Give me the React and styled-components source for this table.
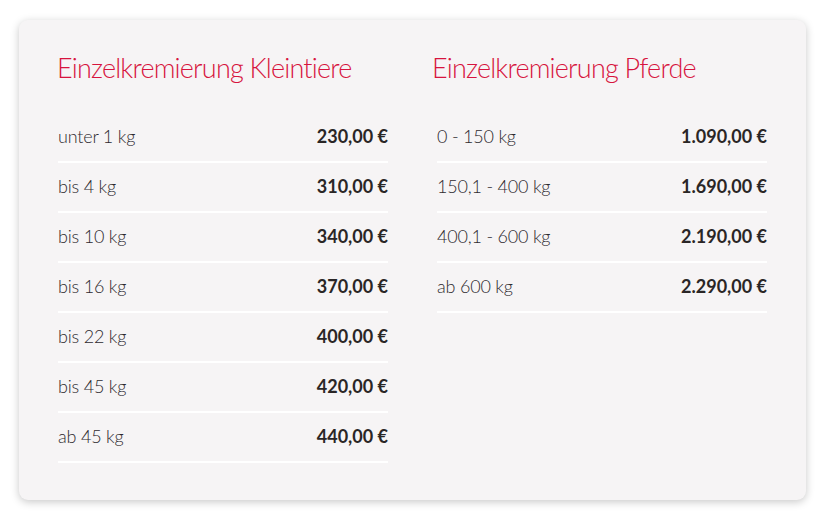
import React from "react";
import styled, { createGlobalStyle } from "styled-components";

const small = [
  ["unter 1 kg", "230,00 €"],
  ["bis 4 kg", "310,00 €"],
  ["bis 10 kg", "340,00 €"],
  ["bis 16 kg", "370,00 €"],
  ["bis 22 kg", "400,00 €"],
  ["bis 45 kg", "420,00 €"],
  ["ab 45 kg", "440,00 €"]
];

const horses = [
  ["0 - 150 kg", "1.090,00 €"],
  ["150,1 - 400 kg", "1.690,00 €"],
  ["400,1 - 600 kg", "2.190,00 €"],
  ["ab 600 kg", "2.290,00 €"]
];

const PriceList = ({ title, rows, shift }) => (
  <Column>
    <Heading $shift={shift}>{title}</Heading>
    <Rows>
      {rows.map(([label, price]) => (
        <Row key={label}>
          <Label>{label}</Label>
          <Price>{price}</Price>
        </Row>
      ))}
    </Rows>
  </Column>
);

const App = () => (
  <>
    <GlobalStyle />
    <Page>
      <Card>
        <PriceList title="Einzelkremierung Kleintiere" rows={small} shift={0} />
        <PriceList title="Einzelkremierung Pferde" rows={horses} shift={-4} />
      </Card>
    </Page>
  </>
);

export default App;

const GlobalStyle = createGlobalStyle`
  body {
    margin: 0;
    background: #ffffff;
    font-family: Lato, "Open Sans", sans-serif;
  }
`;

const Page = styled.div`
  padding: 20px 19px 24px 19px;
`;

const Card = styled.div`
  display: grid;
  grid-template-columns: 330px 330px;
  column-gap: 49px;
  align-items: start;
  height: 480px;
  box-sizing: border-box;
  padding: 0 39px;
  background: #f6f4f5;
  border-radius: 9px;
  box-shadow: 0 2px 8px rgba(0, 0, 0, 0.22);
`;

const Column = styled.div`
  display: flex;
  flex-direction: column;
`;

const Heading = styled.h2`
  margin: 30px 0 27px ${(p) => p.$shift - 1}px;
  line-height: 36px;
  font-family: Lato, sans-serif;
  font-weight: 300;
  font-size: 27px;
  letter-spacing: -0.8px;
  color: #d7143e;
`;

const Rows = styled.div`
  display: flex;
  flex-direction: column;
`;

const Row = styled.div`
  display: flex;
  justify-content: space-between;
  align-items: center;
  height: 48px;
  box-sizing: content-box;
  padding-bottom: 0;
  border-bottom: 2px solid #ffffff;

  & > * {
    margin-top: -2px;
  }
`;

const Label = styled.span`
  font-weight: 300;
  font-size: 18px;
  color: #2e2a2f;
  letter-spacing: -0.2px;
`;

const Price = styled.span`
  font-weight: 700;
  font-size: 18px;
  color: #2a2626;
`;
